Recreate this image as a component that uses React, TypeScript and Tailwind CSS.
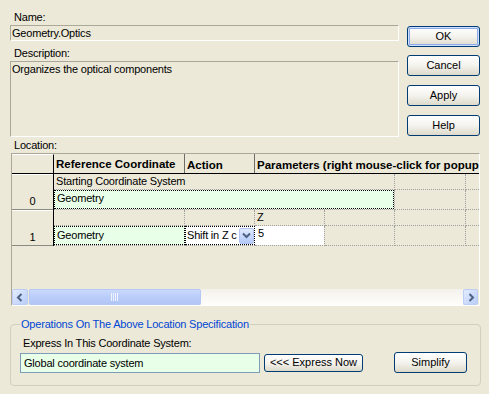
import React from "react";

function XPButton({ children, className = "", def = false }: { children: React.ReactNode; className?: string; def?: boolean }) {
  return (
    <div
      className={
        "flex items-center justify-center border border-[#003C74] rounded-[3px] bg-linear-to-b from-white via-[#F4F3EE] to-[#DDDACB] text-black tracking-normal " +
        (def ? "shadow-[inset_0_0_0_1px_#CEE0FB,inset_0_0_0_2px_#8DABEB] " : "") +
        className
      }
    >
      {children}
    </div>
  );
}

function Dotted({ className = "", children }: { className?: string; children?: React.ReactNode }) {
  return <div className={"border-dotted border-[#A0A0A0] " + className}>{children}</div>;
}

export default function App() {
  return (
    <div className="w-[489px] h-[394px] bg-[#ECE9D8] text-[11px] leading-[13px] tracking-[-0.2px] text-black font-['Liberation_Sans',Arial,sans-serif] overflow-hidden">
      {/* top */}
      <div className="flex pl-[10px] pt-[11px]">
        <div className="w-[389px] flex flex-col">
          <div className="pl-[4px] h-[14px]">Name:</div>
          <div className="h-[16px] border-t border-l border-[#ACA899] border-b-white border-r-white border-b border-r pl-[1px] leading-[14px]">
            Geometry.Optics
          </div>
          <div className="pl-[4px] h-[14px] mt-[6px]">Description:</div>
          <div className="h-[76px] border-t border-l border-[#ACA899] border-b-white border-r-white border-b border-r pl-[1px] leading-[14px]">
            Organizes the optical components
          </div>
        </div>
        <div className="ml-[8px] w-[73px] flex flex-col pt-[15px]">
          <XPButton def className="h-[21px]">OK</XPButton>
          <XPButton className="h-[21px] mt-[8px]">Cancel</XPButton>
          <XPButton className="h-[21px] mt-[9px]">Apply</XPButton>
          <XPButton className="h-[21px] mt-[9px]">Help</XPButton>
        </div>
      </div>

      <div className="pl-[14px] h-[14px] mt-[2px]">Location:</div>

      {/* grid */}
      <div className="ml-[11px] w-[469px] h-[153px] border-t border-l border-[#ACA899] border-b border-r border-b-white border-r-white flex flex-col">
        {/* header */}
        <div className="flex h-[20px] border-b border-black font-bold text-[11.5px] leading-[14px] tracking-normal overflow-hidden shrink-0">
          <div className="w-[42px] border-r border-black border-t border-t-white" />
          <div className="w-[131px] border-r border-[#6E6D66] pl-[2px] pt-[3px] overflow-hidden">Reference Coordinate System</div>
          <div className="w-[70px] border-r border-[#6E6D66] pl-[2px] pt-[4px] overflow-hidden whitespace-nowrap">Action</div>
          <div className="flex-1 pl-[2px] pt-[4px] overflow-hidden whitespace-nowrap">Parameters (right mouse-click for popup menu)</div>
        </div>
        {/* body */}
        <div className="flex shrink-0">
          <div className="w-[42px] flex flex-col border-r border-black">
            <div className="h-[36px] border-t border-t-white border-b border-b-[#8C8A80] flex items-end justify-center pb-[1px]">0</div>
            <div className="h-[36px] border-t border-t-white border-b border-b-[#8C8A80] flex items-end justify-center pb-[1px]">1</div>
          </div>
          <div className="flex-1 flex flex-col">
            {/* row 0a */}
            <div className="flex h-[16px]">
              <Dotted className="w-[341px] border-r border-b pl-[2px] leading-[14px] whitespace-nowrap">Starting Coordinate System</Dotted>
              <Dotted className="w-[71px] border-r border-b" />
              <Dotted className="flex-1 border-b" />
            </div>
            {/* row 0b */}
            <div className="flex h-[20px]">
              <Dotted className="w-[341px] border-b border-r">
                <div className="h-[19px] border border-dotted border-black bg-[#E8FFE8] pl-[2px] leading-[15px]">Geometry</div>
              </Dotted>
              <Dotted className="w-[71px] border-r border-b" />
              <Dotted className="flex-1 border-b" />
            </div>
            {/* row 1a */}
            <div className="flex h-[16px]">
              <Dotted className="w-[131px] border-r border-b" />
              <Dotted className="w-[70px] border-r border-b" />
              <Dotted className="w-[70px] border-r border-b pl-[2px] leading-[15px]">Z</Dotted>
              <Dotted className="w-[70px] border-r border-b" />
              <Dotted className="w-[71px] border-r border-b" />
              <Dotted className="flex-1 border-b" />
            </div>
            {/* row 1b */}
            <div className="flex h-[20px]">
              <Dotted className="w-[131px] border-b">
                <div className="h-[19px] border border-dotted border-black bg-[#E8FFE8] pl-[2px] leading-[16px]">Geometry</div>
              </Dotted>
              <Dotted className="w-[70px] border-b">
                <div className="h-[19px] border border-dotted border-black bg-white flex items-center pl-[1px] overflow-hidden">
                  <span className="whitespace-nowrap overflow-hidden w-[51px]">Shift in Z c</span>
                  <div className="ml-[1px] w-[15px] h-[16px] rounded-[2px] border border-[#B1C4F2] bg-linear-to-b from-[#E1EAFE] to-[#B3C8F6] flex items-center justify-center">
                    <svg width="9" height="7" viewBox="0 0 9 7">
                      <path d="M1 1.5 L4.5 5 L8 1.5" stroke="#4D6185" strokeWidth="2" fill="none" />
                    </svg>
                  </div>
                </div>
              </Dotted>
              <Dotted className="w-[70px] border-r border-b">
                <div className="h-[19px] bg-white pl-[3px] leading-[15px]">5</div>
              </Dotted>
              <Dotted className="w-[70px] border-r border-b" />
              <Dotted className="w-[71px] border-r border-b" />
              <Dotted className="flex-1 border-b" />
            </div>
          </div>
        </div>
        <div className="flex-1" />
        {/* scrollbar */}
        <div className="h-[16px] flex shrink-0 pr-[1px]">
          <div className="w-[16px] h-[16px] rounded-[2px] border border-[#BCCEF6] bg-linear-to-br from-[#E4ECFE] to-[#B9CDF8] flex items-center justify-center">
            <svg width="8" height="9" viewBox="0 0 8 9">
              <path d="M5.5 1 L2 4.5 L5.5 8" stroke="#4D6185" strokeWidth="2" fill="none" />
            </svg>
          </div>
          <div className="ml-[1px] w-[172px] h-[16px] rounded-[2px] border border-[#B4C7F5] bg-linear-to-b from-[#CAD9FD] via-[#BACDFA] to-[#B2C6F6] flex items-center justify-center">
            <svg width="8" height="8" viewBox="0 0 8 8">
              <path d="M0.5 0 V8 M2.5 0 V8 M4.5 0 V8 M6.5 0 V8" stroke="#EEF3FE" strokeWidth="1" />
            </svg>
          </div>
          <div className="flex-1 bg-linear-to-b from-[#F3F1EC] to-[#FEFEFB]" />
          <div className="w-[15px] h-[16px] rounded-[2px] border border-[#BCCEF6] bg-linear-to-br from-[#E4ECFE] to-[#B9CDF8] flex items-center justify-center">
            <svg width="8" height="9" viewBox="0 0 8 9">
              <path d="M2.5 1 L6 4.5 L2.5 8" stroke="#4D6185" strokeWidth="2" fill="none" />
            </svg>
          </div>
        </div>
      </div>

      {/* group box */}
      <fieldset className="ml-[10px] mt-[12px] w-[471px] border border-[#D0D0BF] rounded-[4px] pl-[9px] pb-[12px]">
        <legend className="text-[#0046D5] px-[1px] leading-[13px]">Operations On The Above Location Specification</legend>
        <div className="pl-[3px] mt-[6px] h-[13px]">Express In This Coordinate System:</div>
        <div className="flex items-center mt-[2px]">
          <div className="w-[240px] h-[20px] border border-[#7F9DB9] bg-[#E8FFE8] pl-[3px] leading-[18px]">Global coordinate system</div>
          <XPButton className="ml-[4px] w-[99px] h-[18px]">&lt;&lt;&lt; Express Now</XPButton>
          <XPButton className="ml-[31px] w-[73px] h-[21px]">Simplify</XPButton>
        </div>
      </fieldset>
    </div>
  );
}
